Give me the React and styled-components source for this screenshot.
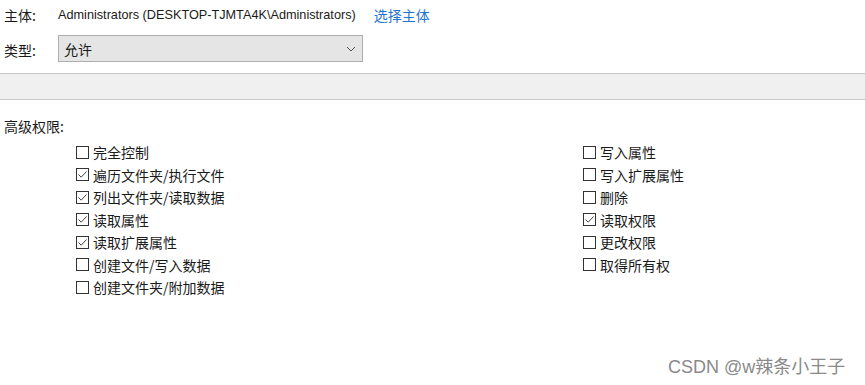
import React from "react";
import styled, { createGlobalStyle } from "styled-components";

const Global = createGlobalStyle`
  html, body { margin: 0; padding: 0; background: #fff; }
  body { font-family: "Noto Sans CJK SC", sans-serif; }
`;

const Page = styled.div`
  position: relative;
  width: 865px;
  height: 385px;
  background: #fff;
  color: #1a1a1a;
  font-size: 14px;
  font-family: "Noto Sans CJK SC", sans-serif;
  overflow: hidden;
`;

const Row = styled.div`
  display: flex;
  align-items: ${(p) => p.align || "center"};
  height: ${(p) => p.h}px;
  padding-left: 4px;
`;

const Label = styled.div`
  width: 54px;
  align-self: center;
  padding-top: ${(p) => p.pt || 0}px;
`;

const Value = styled.div`
  white-space: nowrap;
  font-family: "Liberation Sans", sans-serif;
  font-size: 12.7px;
`;

const Link = styled.a`
  margin-left: 18px;
  color: #1f74d0;
  text-decoration: none;
  cursor: pointer;
`;

const Select = styled.div`
  box-sizing: border-box;
  width: 305px;
  height: 27px;
  display: flex;
  align-items: center;
  justify-content: space-between;
  padding: 0 6px 0 5px;
  background: #e5e5e5;
  border: 1px solid #adadad;
`;

const Band = styled.div`
  margin-top: 11px;
  height: 25px;
  background: #f0f0f0;
  border-top: 1px solid #c8c8c8;
  border-bottom: 1px solid #c8c8c8;
`;

const Section = styled.div`
  padding: 16px 0 0 4px;
`;

const Grid = styled.div`
  display: grid;
  grid-template-columns: 507px 1fr;
  margin-top: 5px;
  padding-left: 76px;
`;

const Col = styled.div`
  display: flex;
  flex-direction: column;
`;

const Item = styled.label`
  display: flex;
  align-items: center;
  height: 22.5px;
  gap: 4px;
  white-space: nowrap;
`;

const Box = styled.span`
  box-sizing: border-box;
  width: 13px;
  height: 13px;
  border: 1px solid #333;
  background: #fff;
  display: flex;
  align-items: center;
  justify-content: center;
`;

const Watermark = styled.div`
  position: absolute;
  left: 668px;
  top: 352px;
  font-size: 18px;
  color: #8a8a8a;
  font-family: "Liberation Sans", "Noto Sans CJK SC", sans-serif;
  white-space: nowrap;
`;

const Check = ({ on, text }) => (
  <Item>
    <Box>
      {on && (
        <svg width="11" height="11" viewBox="0 0 11 11">
          <path d="M1.5 5.5 L4.2 8.2 L9.5 2.5" fill="none" stroke="#444" strokeWidth="1" />
        </svg>
      )}
    </Box>
    {text}
  </Item>
);

const left = [
  ["完全控制", false],
  ["遍历文件夹/执行文件", true],
  ["列出文件夹/读取数据", true],
  ["读取属性", true],
  ["读取扩展属性", true],
  ["创建文件/写入数据", false],
  ["创建文件夹/附加数据", false],
];
const right = [
  ["写入属性", false],
  ["写入扩展属性", false],
  ["删除", false],
  ["读取权限", true],
  ["更改权限", false],
  ["取得所有权", false],
];

export default function App() {
  return (
    <Page>
      <Global />
      <Row h={29}>
        <Label>主体:</Label>
        <Value>Administrators (DESKTOP-TJMTA4K\Administrators)</Value>
        <Link>选择主体</Link>
      </Row>
      <Row h={33} align="flex-end">
        <Label pt={8}>类型:</Label>
        <Select>
          <span>允许</span>
          <svg width="10" height="6" viewBox="0 0 10 6">
            <path d="M1 1 L5 5 L9 1" fill="none" stroke="#555" strokeWidth="1" />
          </svg>
        </Select>
      </Row>
      <Band />
      <Section>高级权限:</Section>
      <Grid>
        <Col>
          {left.map(([t, on]) => (
            <Check key={t} text={t} on={on} />
          ))}
        </Col>
        <Col>
          {right.map(([t, on]) => (
            <Check key={t} text={t} on={on} />
          ))}
        </Col>
      </Grid>
      <Watermark>CSDN @w辣条小王子</Watermark>
    </Page>
  );
}
